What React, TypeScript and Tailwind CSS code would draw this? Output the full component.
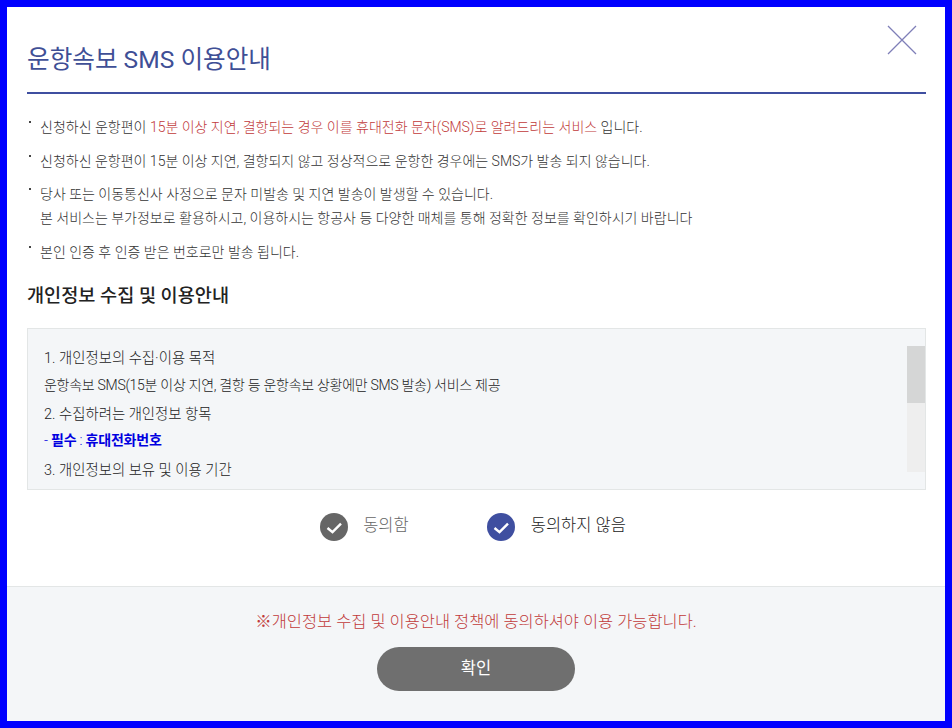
const font = "font-['Roboto','Noto_Sans_CJK_KR',sans-serif]";

const Bullet = ({ children }: { children: React.ReactNode }) => (
  <li className="relative pl-[13px] text-[14px] leading-[24px] text-[#333] font-light">
    <span className="absolute left-[2px] top-[6px] h-[2px] w-[2px] bg-[#444]" />
    {children}
  </li>
);

const CheckCircle = ({ color }: { color: string }) => (
  <svg width="28" height="28" viewBox="0 0 28 28">
    <circle cx="14" cy="14" r="14" fill={color} />
    <path d="M7.5 15l5 4.2 8.5-8.5" fill="none" stroke="#fff" strokeWidth="2.4" />
  </svg>
);

export default function App() {
  return (
    <div className={`${font} relative flex h-[728px] w-[952px] flex-col border-[7px] border-[#0000ff] bg-white`}>
      <button className="absolute right-[28px] top-[18px]">
        <svg width="30" height="30" viewBox="0 0 30 30" className="block">
          <path d="M1 1l28 28M29 1L1 29" stroke="#7f7fb8" strokeWidth="1.3" fill="none" />
        </svg>
      </button>

      <div className="flex-1 pl-5 pr-[19px]">
        <h1 className="h-[87px] border-b-2 border-[#3f4fa0] pt-[33px] text-[24.6px] leading-[40px] font-normal text-[#3f4f96]">
          운항속보 SMS 이용안내
        </h1>

        <ul className="mt-[21px] flex flex-col gap-[9.5px]">
          <Bullet>
            신청하신 운항편이 <span className="text-[#c13a3a]">15분 이상 지연, 결항되는 경우 이를 휴대전화 문자(SMS)로 알려드리는 서비스</span> 입니다.
          </Bullet>
          <Bullet>신청하신 운항편이 15분 이상 지연, 결항되지 않고 정상적으로 운항한 경우에는 SMS가 발송 되지 않습니다.</Bullet>
          <Bullet>
            당사 또는 이동통신사 사정으로 문자 미발송 및 지연 발송이 발생할 수 있습니다.
            <br />
            본 서비스는 부가정보로 활용하시고, 이용하시는 항공사 등 다양한 매체를 통해 정확한 정보를 확인하시기 바랍니다
          </Bullet>
          <Bullet>본인 인증 후 인증 받은 번호로만 발송 됩니다.</Bullet>
        </ul>

        <h2 className="mt-[18px] text-[18.6px] leading-[28px] font-medium text-[#222]">개인정보 수집 및 이용안내</h2>

        <div className="relative mt-[18px] h-[162px] overflow-hidden border border-[#e3e6e6] bg-[#f4f6f8] px-4 pt-[18px] text-[14.4px] leading-[24px] font-light text-[#222]">
          <p>1. 개인정보의 수집·이용 목적</p>
          <p className="mt-[2px] text-[14px] tracking-[-0.28px]">운항속보 SMS(15분 이상 지연, 결항 등 운항속보 상황에만 SMS 발송) 서비스 제공</p>
          <p className="mt-[6px]">2. 수집하려는 개인정보 항목</p>
          <p className="mt-[1px] text-[14px] tracking-[-0.2px] text-[#0000e0]">
            - <b className="font-bold">필수</b> : <b className="font-bold">휴대전화번호</b>
          </p>
          <p className="mt-[7px]">3. 개인정보의 보유 및 이용 기간</p>
          <div className="absolute right-0 top-[17px] h-[126px] w-[18px] bg-[#eeeeee]">
            <div className="h-[57px] w-full bg-[#d5d6d6]" />
          </div>
        </div>

        <div className="mt-[23px] flex items-center justify-center pr-[7px]">
          <div className="flex items-center gap-[15px] text-[16.5px] font-light text-[#666]">
            <CheckCircle color="#666666" />
            동의함
          </div>
          <div className="ml-[78px] flex items-center gap-[16px] text-[16.5px] font-light text-[#222]">
            <CheckCircle color="#3f4fa0" />
            동의하지 않음
          </div>
        </div>
      </div>

      <div className="flex h-[135px] flex-col items-center border-t border-[#e3e6e6] bg-[#f4f6f8] pt-[23px]">
        <p className="text-[16.45px] leading-[24px] font-light text-[#c13a3a]">※개인정보 수집 및 이용안내 정책에 동의하셔야 이용 가능합니다.</p>
        <button className="mt-[13px] h-[44px] w-[198px] rounded-full bg-[#6f6f6f] text-[16.5px] text-white">확인</button>
      </div>
    </div>
  );
}
